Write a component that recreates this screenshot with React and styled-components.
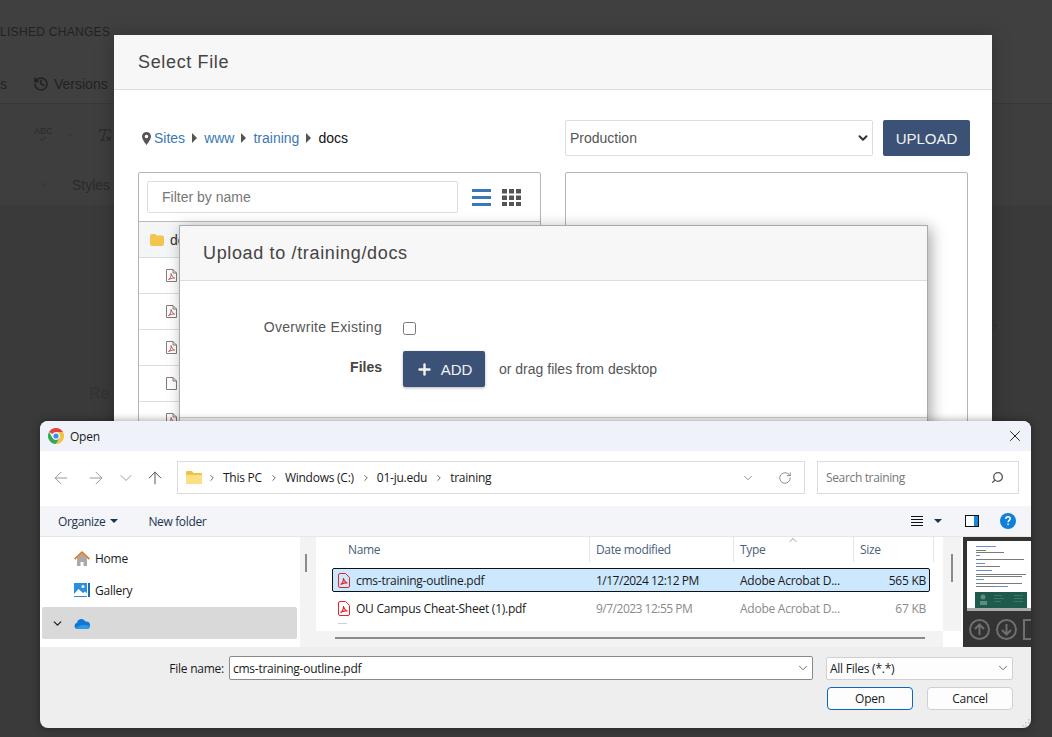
import styled, { createGlobalStyle } from "styled-components";
import {
  ArrowLeft,
  ArrowRight,
  ArrowUp,
  Check,
  ChevronDown,
  ChevronRight,
  ChevronUp,
  History,
  Plus,
  RemoveFormatting,
  RotateCw,
  Search,
  X,
} from "lucide-react";

const GlobalStyle = createGlobalStyle`
  html, body {
    margin: 0;
    padding: 0;
    background: #3a3a3a;
  }
  * {
    box-sizing: border-box;
  }
`;

const WEB_FONT = `"Liberation Sans", Arial, sans-serif`;
const WIN_FONT = `"Open Sans", "Noto Sans", sans-serif`;

// whole screenshot
const Page = styled.div`
  position: relative;
  width: 1052px;
  height: 737px;
  overflow: hidden;
  background: #3a3a3a;
  font-family: ${WEB_FONT};
`;

// dimmed editor behind the modals
const Backdrop = styled.div`
  height: 737px;
  display: flex;
  flex-direction: column;
  color: #222;
`;
const BackTop = styled.div`
  height: 68px;
  background: #404040;
  padding-top: 25px;
  font-size: 12px;
  letter-spacing: 0.3px;
  white-space: nowrap;
`;
const BackTabs = styled.div`
  height: 36px;
  background: #404040;
  border-bottom: 1px solid #383838;
  display: flex;
  align-items: center;
  gap: 26px;
  padding-bottom: 4px;
  font-size: 14px;
`;
const BackVersions = styled.span`
  display: flex;
  align-items: center;
  gap: 5px;
`;
const BackTools = styled.div`
  height: 61px;
  background: #3e3e3e;
  display: flex;
  align-items: center;
  padding-left: 34px;
  gap: 12px;
  color: #2a2a2a;
`;
const SpellIcon = styled.div`
  display: flex;
  flex-direction: column;
  align-items: center;
  font-size: 9px;
  line-height: 8px;
  height: 16px;
`;
const BackStyles = styled.div`
  height: 40px;
  background: #3e3e3e;
  display: flex;
  align-items: center;
  padding-left: 38px;
  gap: 22px;
  font-size: 14px;
  color: #2b2b2b;
`;
const BackBody = styled.div`
  flex: 1;
  background: #3a3a3a;
  display: flex;
  justify-content: space-between;
  font-size: 16px;
  padding: 180px 55px 0 89px;
  color: #333;
`;
const BackWord = styled.span`
  margin-top: ${(p) => p.$top}px;
`;

// Select File modal
const SelectModal = styled.div`
  position: absolute;
  left: 114px;
  top: 35px;
  width: 878px;
  height: 420px;
  background: #fff;
  box-shadow: 0 0 18px rgba(0, 0, 0, 0.25);
`;
const ModalHeader = styled.div`
  height: ${(p) => p.$height}px;
  background: #f7f7f7;
  border-bottom: 1px solid #ddd;
  padding-left: ${(p) => p.$pad}px;
  display: flex;
  align-items: center;
  color: #444;
  font-size: 18px;
  letter-spacing: 0.65px;
`;
const SelectBody = styled.div`
  display: grid;
  grid-template-columns: 403px 403px;
  column-gap: 24px;
  padding: 30px 0 0 24px;
`;
const Breadcrumb = styled.div`
  height: 36px;
  display: flex;
  align-items: center;
  font-size: 14px;
  color: #111;
  padding-left: 4px;
`;
const Crumb = styled.a`
  color: #3b78b8;
  margin-left: ${(p) => (p.$first ? "3px" : "0")};
`;
const Caret = styled.span`
  width: 0;
  height: 0;
  margin: 0 7px 1px 7px;
  border-left: 5px solid #555;
  border-top: 5px solid transparent;
  border-bottom: 5px solid transparent;
`;
const SiteRow = styled.div`
  height: 36px;
  display: flex;
  gap: 10px;
`;
const SiteSelect = styled.div`
  width: 308px;
  height: 36px;
  flex: none;
  border: 1px solid #ddd;
  border-radius: 2px;
  display: flex;
  align-items: center;
  justify-content: space-between;
  padding: 0 2px 0 4px;
  color: #555;
  font-size: 14px;
`;
const NavyButton = styled.div`
  background: #3b5175;
  color: #f2f2f2;
  border-radius: 2px;
  display: flex;
  flex: none;
  align-items: center;
  justify-content: center;
  font-size: 15px;
  width: ${(p) => p.$width}px;
  height: 36px;
  gap: 8px;
  box-shadow: ${(p) => (p.$raised ? "0 1px 3px rgba(0,0,0,.3)" : "none")};
`;
const Panel = styled.div`
  margin-top: 16px;
  height: 300px;
  border: 1px solid #b5b5b5;
  border-radius: 2px;
`;
const FilterBar = styled.div`
  height: 49px;
  padding: 8px 0 0 8px;
  display: flex;
  align-items: flex-start;
  border-bottom: 1px solid #bbb;
`;
const FilterInput = styled.div`
  width: 311px;
  height: 32px;
  border: 1px solid #ddd;
  border-radius: 2px;
  padding-left: 14px;
  display: flex;
  align-items: center;
  color: #777;
  font-size: 14px;
`;
const ViewIcons = styled.div`
  display: flex;
  align-items: center;
  gap: 11px;
  height: 32px;
  padding-left: 14px;
`;
const FolderRow = styled.div`
  height: 36px;
  background: #f4f5f7;
  border-bottom: 1px solid #ddd;
  display: flex;
  align-items: center;
  padding-left: 11px;
  gap: 6px;
  font-size: 14px;
  color: #333;
`;
const FileRow = styled.div`
  height: 36px;
  border-bottom: 1px solid #ddd;
  display: flex;
  align-items: center;
  padding-left: 27px;
`;

// Upload modal
const UploadModal = styled.div`
  position: absolute;
  left: 179px;
  top: 225px;
  width: 749px;
  height: 205px;
  background: #fff;
  border: 1px solid #aaa;
  box-shadow: 3px 3px 14px rgba(0, 0, 0, 0.35);
`;
const UploadForm = styled.div`
  display: grid;
  grid-template-columns: 202px 1fr;
  column-gap: 21px;
  row-gap: 16px;
  padding-top: 40px;
  align-items: center;
  color: #555;
  font-size: 14px;
`;
const FieldLabel = styled.div`
  text-align: right;
  font-weight: ${(p) => (p.$bold ? 700 : 400)};
  color: ${(p) => (p.$bold ? "#444" : "#555")};
  letter-spacing: ${(p) => (p.$bold ? "0" : "0.3px")};
  margin-top: ${(p) => (p.$bold ? "-5px" : "-2px")};
`;
const Checkbox = styled.div`
  width: 13px;
  height: 13px;
  border: 1px solid #777;
  border-radius: 2.5px;
`;
const AddRow = styled.div`
  display: flex;
  align-items: center;
  gap: 14px;
`;
const UploadFooterLine = styled.div`
  position: absolute;
  left: 0;
  right: 0;
  top: 191px;
  height: 13px;
  border-top: 1px solid #ccc;
  background: #f7f7f7;
`;

// Windows open dialog
const Dialog = styled.div`
  position: absolute;
  left: 40px;
  top: 421px;
  width: 991px;
  height: 307px;
  background: #eee;
  border-radius: 8px;
  overflow: hidden;
  font-family: ${WIN_FONT};
  font-size: 12px;
  letter-spacing: -0.25px;
  color: #1a1a1a;
  box-shadow: 0 0 8px rgba(0, 0, 0, 0.4);
`;
const TitleBar = styled.div`
  height: 30px;
  background: #eff3f9;
  display: flex;
  align-items: center;
  padding: 0 7px 0 8px;
  gap: 6px;
`;
const TitleText = styled.span`
  flex: 1;
`;
const NavBar = styled.div`
  height: 55px;
  background: #fff;
  display: flex;
  align-items: center;
  padding: 0 12px 2px 11px;
  color: #9a9a9a;
`;
const NavButtons = styled.div`
  width: 126px;
  display: flex;
  align-items: center;
  gap: 10px;
`;
const AddressBar = styled.div`
  width: 628px;
  height: 33px;
  border: 1px solid #dcdcdc;
  display: flex;
  align-items: center;
  padding: 0 12px 0 8px;
  color: #1a1a1a;
`;
const PathStep = styled.span`
  display: contents;
`;
const PathPart = styled.span`
  margin-left: 6px;
`;
const PathEnd = styled.div`
  margin-left: auto;
  display: flex;
  align-items: center;
  gap: 23px;
  color: #666;
`;
const SearchBox = styled.div`
  width: 202px;
  height: 33px;
  margin-left: 12px;
  border: 1px solid #dcdcdc;
  display: flex;
  align-items: center;
  justify-content: space-between;
  padding: 0 14px 0 8px;
  color: #777;
  letter-spacing: -0.35px;
`;
const CommandBar = styled.div`
  height: 31px;
  background: #f3f5f8;
  border-bottom: 1px solid #e6e6e6;
  display: flex;
  align-items: center;
  padding: 0 15px 0 18px;
  color: #1e3250;
  letter-spacing: -0.35px;
`;
const SmallTriangle = styled.span`
  width: 0;
  height: 0;
  margin-left: ${(p) => p.$gap}px;
  border-top: 4px solid #1e3250;
  border-left: 4px solid transparent;
  border-right: 4px solid transparent;
`;
const NewFolder = styled.span`
  margin-left: 30px;
  flex: 1;
`;
const CommandIcons = styled.div`
  display: flex;
  align-items: center;
`;
const CommandGap = styled.span`
  width: ${(p) => p.$width}px;
`;
const Panes = styled.div`
  height: 110px;
  background: #fff;
  display: flex;
`;
const NavPane = styled.div`
  width: 260px;
  flex: none;
  padding: 5px 3px 0 2px;
`;
const NavItem = styled.div`
  height: 32px;
  border-radius: 2px;
  display: flex;
  align-items: center;
  gap: ${(p) => (p.$open ? "10px" : "5px")};
  margin-top: ${(p) => (p.$open ? "1px" : "0")};
  padding-left: ${(p) => (p.$open ? "9px" : "32px")};
  background: ${(p) => (p.$open ? "#d9d9d9" : "transparent")};
  color: #1a1a1a;
`;
const Splitter = styled.div`
  width: 16px;
  flex: none;
  background: #f3f3f3;
  padding: 17px 0 0 5px;
`;
const ThumbV = styled.div`
  width: 2px;
  height: ${(p) => p.$height}px;
  background: #8a8a8a;
`;
const ListMain = styled.div`
  width: 627px;
  flex: none;
  background: #f3f3f3;
`;
const ListWhite = styled.div`
  height: 94px;
  background: #fff;
  overflow: hidden;
`;
const ColumnHeads = styled.div`
  display: grid;
  grid-template-columns: 274px 144px 120px 80px;
  height: 25px;
  color: #4c607a;
  letter-spacing: -0.35px;
`;
const ColumnHead = styled.div`
  position: relative;
  padding-left: ${(p) => (p.$first ? "32px" : "6px")};
  display: flex;
  align-items: center;
  border-right: 1px solid #e5e5e5;
`;
const SortMark = styled.span`
  position: absolute;
  left: 53px;
  top: -3px;
  color: #555;
  display: flex;
`;
const FileLine = styled.div`
  display: grid;
  grid-template-columns: 257px 144px 120px 75px;
  width: 598px;
  height: 24px;
  margin: ${(p) => (p.$selected ? "6px" : "4px")} 0 0 16px;
  align-items: center;
  background: ${(p) => (p.$selected ? "#cce8ff" : "transparent")};
  border: 1px solid ${(p) => (p.$selected ? "#111" : "transparent")};
  border-radius: 2px;
  color: ${(p) => (p.$selected ? "#1a1a1a" : "#8a8a8a")};
`;
const NameCell = styled.div`
  white-space: nowrap;
  overflow: hidden;
  padding-left: 5px;
  color: #1a1a1a;
  display: flex;
  align-items: center;
  gap: 6px;
`;
const FileCell = styled.div`
  white-space: nowrap;
  overflow: hidden;
  padding: 0 3px 0 6px;
  letter-spacing: ${(p) => (p.$date ? "-0.5px" : "-0.25px")};
  text-align: ${(p) => (p.$right ? "right" : "left")};
`;
const NextRowPeek = styled.div`
  width: 9px;
  height: 1px;
  margin: 3px 0 0 22px;
  background: #d0d0d0;
`;
const HScroll = styled.div`
  height: 2px;
  width: 590px;
  margin: 6px 0 0 19px;
  background: #8a8a8a;
`;
const VScrollColumn = styled.div`
  width: 18px;
  flex: none;
  height: 94px;
  background: #f3f3f3;
  padding: 17px 0 0 8px;
`;
const Preview = styled.div`
  width: 68px;
  flex: none;
  height: 110px;
  margin-left: 2px;
  background: #333;
  padding: 4px 0 0 4px;
  overflow: hidden;
`;
const PreviewButtons = styled.div`
  display: flex;
  gap: 6px;
  padding: 8px 0 0 2px;
`;
const PreviewBox = styled.div`
  width: 14px;
  height: 21px;
  flex: none;
  border: 2px solid #6f6f6f;
`;
const Footer = styled.div`
  padding: 9px 18px 0 0;
`;
const FooterRow = styled.div`
  display: flex;
  align-items: center;
  justify-content: flex-end;
`;
const ButtonRow = styled(FooterRow)`
  margin-top: 7px;
`;
const FooterLabel = styled.span`
  margin-right: 5px;
`;
const NameInput = styled.div`
  width: 584px;
  height: 24px;
  background: #fff;
  border: 1px solid #8a8a8a;
  border-radius: 2px;
  display: flex;
  align-items: center;
  justify-content: space-between;
  padding: 0 2px 0 3px;
  margin-right: 13px;
`;
const TypeSelect = styled.div`
  width: 187px;
  height: 23px;
  background: #fdfdfd;
  border: 1px solid #d0d0d0;
  border-radius: 2px;
  display: flex;
  align-items: center;
  justify-content: space-between;
  padding: 0 2px 0 3px;
`;
const WinButton = styled.div`
  width: 86px;
  height: 23px;
  margin-left: ${(p) => (p.$primary ? "0" : "14px")};
  background: #fdfdfd;
  border: 1px solid ${(p) => (p.$primary ? "#0a68c4" : "#d0d0d0")};
  border-radius: 4px;
  display: flex;
  align-items: center;
  justify-content: center;
`;
const ResizeGrip = styled.svg`
  position: absolute;
  right: 1px;
  bottom: 1px;
`;

const HamburgerIcon = () => (
  <svg width="19" height="17" viewBox="0 0 19 17">
    <rect y="0" width="19" height="3" fill="#3b78b8" />
    <rect y="7" width="19" height="3" fill="#3b78b8" />
    <rect y="14" width="19" height="3" fill="#3b78b8" />
  </svg>
);

const GridIcon = () => (
  <svg width="19" height="17" viewBox="0 0 19 17" fill="#555">
    {[0, 6.5, 13].map((y) =>
      [0, 7, 14].map((x) => <rect key={`${x}-${y}`} x={x} y={y} width="5" height="4.5" />)
    )}
  </svg>
);

const PinIcon = () => (
  <svg width="9" height="13" viewBox="0 0 9 13">
    <path
      d="M4.5 0C2 0 0 2 0 4.5 0 7.5 4.5 13 4.5 13S9 7.5 9 4.5C9 2 7 0 4.5 0Z M4.5 2.7a1.8 1.8 0 1 1 0 3.6 1.8 1.8 0 0 1 0-3.6Z"
      fill="#555"
      fillRule="evenodd"
    />
  </svg>
);

const WebFolderIcon = () => (
  <svg width="14" height="12" viewBox="0 0 14 12">
    <path
      d="M2 0h3.2l1.4 1.6H12a2 2 0 0 1 2 2V10a2 2 0 0 1-2 2H2a2 2 0 0 1-2-2V2a2 2 0 0 1 2-2Z"
      fill="#f3c54e"
    />
  </svg>
);

const SmallFileIcon = ({ pdf }) => (
  <svg width="11" height="13" viewBox="0 0 11 13" fill="none" stroke="#8a7a7a" strokeWidth="1">
    <path d="M.5.5H7L10.5 4v8.5H.5Z M7 .5V4h3.5" />
    {pdf && <path d="M2.5 10.5c2-1 3-4 2.500-6 .5 2 2 4 3.500 4.500-2 0-4 .5-6 1.500Z" strokeWidth=".8" stroke="#b03a3a" />}
  </svg>
);

const ChromeIcon = () => (
  <svg width="16" height="16" viewBox="0 0 16 16">
    <path d="M8 0a8 8 0 0 1 6.930 4H8a4 4 0 0 0-3.460 2L1.070 4A8 8 0 0 1 8 0Z" fill="#e0453a" />
    <path d="M14.930 4A8 8 0 0 1 8 16l3.460-6a4 4 0 0 0 0-4A4 4 0 0 0 8 4Z" fill="#f5c33b" />
    <path d="M1.070 4l3.470 6A4 4 0 0 0 8 12a4 4 0 0 0 3.460-2L8 16A8 8 0 0 1 1.070 4Z" fill="#34a853" />
    <circle cx="8" cy="8" r="3.200" fill="#fff" />
    <circle cx="8" cy="8" r="2.600" fill="#4285f4" />
  </svg>
);

const WinFolderIcon = () => (
  <svg width="16" height="13" viewBox="0 0 16 13">
    <path d="M1 0h5l1.500 2H15a1 1 0 0 1 1 1v9a1 1 0 0 1-1 1H1a1 1 0 0 1-1-1V1a1 1 0 0 1 1-1Z" fill="#f0c244" />
    <path d="M0 4h16v8a1 1 0 0 1-1 1H1a1 1 0 0 1-1-1Z" fill="#fbdf83" />
  </svg>
);

const HomeIcon = () => (
  <svg width="16" height="15" viewBox="0 0 16 15">
    <path d="M3 7 8 2.500 13 7v8H9.500v-4h-3v4H3Z" fill="#a9a9a9" />
    <path d="M0 7.500 8 0l8 7.500-1.200 1.200L8 2.400 1.200 8.700Z" fill="#dd7a28" />
  </svg>
);

const GalleryIcon = () => (
  <svg width="16" height="16" viewBox="0 0 16 16">
    <rect x="0" y="1" width="13" height="14" fill="#2b8fe0" />
    <rect x="14" y="1" width="2" height="14" fill="#1c6cb5" />
    <circle cx="9" cy="4.500" r="1.500" fill="#fff" />
    <path d="M0 12 4.500 7 9 11l2-1.500 2 2V14H0Z" fill="#fff" />
  </svg>
);

const CloudIcon = () => (
  <svg width="16" height="11" viewBox="0 0 16 11">
    <path d="M3.500 11A3.200 3.200 0 0 1 3 4.700 4.500 4.500 0 0 1 11.500 3.500 3.800 3.800 0 0 1 13 11Z" fill="#0f78d4" />
    <path d="M2 10.500C4 7.500 9 6 16 8c-.4 2-1.500 3-3 3H3.500Z" fill="#2b9be8" />
  </svg>
);

const RedPdfIcon = () => (
  <svg width="12" height="15" viewBox="0 0 12 15" fill="none" stroke="#e3242b" style={{ flex: "none" }}>
    <path d="M2 .5h5.500L11.500 4.500V13a1.500 1.500 0 0 1-1.500 1.500H2A1.500 1.500 0 0 1 .5 13V2A1.500 1.500 0 0 1 2 .5Z" />
    <path d="M2.500 11.500c2-1 3-4 3-6.500.5 2.500 2 4.500 4 5-2.500-.3-5 .2-7 1.500Z" strokeWidth="1.100" />
  </svg>
);

const DetailsIcon = () => (
  <svg width="12" height="10" viewBox="0 0 12 10" stroke="#111" strokeWidth="1">
    {[0.5, 3.5, 6.5, 9.5].map((y) => (
      <line key={y} x1="0" x2="12" y1={y} y2={y} />
    ))}
  </svg>
);

const PreviewPaneIcon = () => (
  <svg width="14" height="12" viewBox="0 0 14 12">
    <rect x=".5" y=".5" width="13" height="11" fill="#fff" stroke="#111" />
    <rect x="9" y="1" width="4" height="10" fill="#1a86d9" />
  </svg>
);

const HelpIcon = () => (
  <svg width="16" height="16" viewBox="0 0 16 16">
    <circle cx="8" cy="8" r="8" fill="#0f7fd8" />
    <path d="M5.800 6c0-3 4.400-3 4.400-.3 0 1.700-2.100 1.700-2.100 3.500" fill="none" stroke="#fff" strokeWidth="1.500" />
    <rect x="7.300" y="10.500" width="1.500" height="1.600" fill="#fff" />
  </svg>
);

// tiny picture of the selected pdf
const PdfThumb = () => (
  <svg width="64" height="70" viewBox="0 0 64 70" style={{ display: "block" }}>
    <rect width="64" height="70" fill="#fff" />
    <g fill="#444" opacity="0.7">
      <rect x="9" y="5" width="20" height="1" fill="#2b5fc0" />
      <rect x="9" y="9" width="10" height="1" />
      <rect x="9" y="11" width="28" height="1" />
      <rect x="9" y="14" width="4" height="1" fill="#2b5fc0" />
      <rect x="9" y="18" width="48" height="1" />
      <rect x="9" y="22" width="9" height="1" fill="#2b5fc0" />
      <rect x="9" y="25" width="24" height="1" />
      <rect x="9" y="29" width="16" height="1" fill="#2b5fc0" />
      <rect x="9" y="33" width="50" height="1" />
      <rect x="9" y="35" width="46" height="1" />
      <rect x="9" y="38" width="8" height="1" fill="#2b5fc0" />
      <rect x="9" y="42" width="46" height="1" />
      <rect x="9" y="45" width="18" height="1" />
      <rect x="27" y="45" width="14" height="1" fill="#2b5fc0" />
    </g>
    <rect x="8" y="51" width="52" height="16" fill="#1d5c4d" />
    <circle cx="16" cy="56" r="2.500" fill="#5f8c80" />
    <rect x="13" y="60" width="7" height="4" fill="#5f8c80" />
    <g fill="#3f7667">
      <rect x="27" y="54" width="8" height="1" />
      <rect x="27" y="57" width="10" height="1" />
      <rect x="27" y="60" width="7" height="1" />
      <rect x="47" y="54" width="9" height="1" />
      <rect x="47" y="57" width="9" height="1" />
      <rect x="47" y="60" width="9" height="1" />
    </g>
    <rect y="67" width="64" height="3" fill="#aaa" />
  </svg>
);

const CircleArrow = ({ down }) => (
  <svg width="21" height="21" viewBox="0 0 21 21" fill="none" stroke="#6f6f6f" strokeWidth="2" style={{ flex: "none" }}>
    <circle cx="10.500" cy="10.500" r="9.500" />
    {down ? <path d="M10.500 5v10M6 11l4.500 4.500L15 11" /> : <path d="M10.500 16V6M6 10l4.500-4.500L15 10" />}
  </svg>
);

const files = [
  { name: "cms-training-outline.pdf", date: "1/17/2024 12:12 PM", size: "565 KB", selected: true },
  { name: "OU Campus Cheat-Sheet (1).pdf", date: "9/7/2023 12:55 PM", size: "67 KB" },
];

const pathParts = ["This PC", "Windows (C:)", "01-ju.edu", "training"];

export default function App() {
  return (
    <Page>
      <GlobalStyle />
      <Backdrop>
        <BackTop>LISHED CHANGES</BackTop>
        <BackTabs>
          <span>s</span>
          <BackVersions>
            <History size={16} strokeWidth={2.4} />
            Versions
          </BackVersions>
        </BackTabs>
        <BackTools>
          <SpellIcon>
            ABC
            <Check size={10} strokeWidth={3} />
          </SpellIcon>
          <ChevronDown size={10} strokeWidth={2} color="#333" />
          <RemoveFormatting size={16} strokeWidth={1.6} style={{ marginLeft: 10 }} />
        </BackTools>
        <BackStyles>
          <ChevronDown size={12} strokeWidth={2} color="#333" />
          Styles
        </BackStyles>
        <BackBody>
          <BackWord $top={0}>Re</BackWord>
          <BackWord $top={-70}>s</BackWord>
        </BackBody>
      </Backdrop>

      <SelectModal>
        <ModalHeader $height={55} $pad={24}>
          Select File
        </ModalHeader>
        <SelectBody>
          <Breadcrumb>
            <PinIcon />
            <Crumb $first>Sites</Crumb>
            <Caret />
            <Crumb>www</Crumb>
            <Caret />
            <Crumb>training</Crumb>
            <Caret />
            docs
          </Breadcrumb>
          <SiteRow>
            <SiteSelect>
              Production
              <ChevronDown size={14} strokeWidth={3.4} color="#333" />
            </SiteSelect>
            <NavyButton $width={87}>UPLOAD</NavyButton>
          </SiteRow>
          <Panel>
            <FilterBar>
              <FilterInput>Filter by name</FilterInput>
              <ViewIcons>
                <HamburgerIcon />
                <GridIcon />
              </ViewIcons>
            </FilterBar>
            <FolderRow>
              <WebFolderIcon />
              docs
            </FolderRow>
            <FileRow>
              <SmallFileIcon pdf />
            </FileRow>
            <FileRow>
              <SmallFileIcon pdf />
            </FileRow>
            <FileRow>
              <SmallFileIcon pdf />
            </FileRow>
            <FileRow>
              <SmallFileIcon />
            </FileRow>
            <FileRow>
              <SmallFileIcon pdf />
            </FileRow>
          </Panel>
          <Panel />
        </SelectBody>
      </SelectModal>

      <UploadModal>
        <ModalHeader $height={55} $pad={23}>
          Upload to /training/docs
        </ModalHeader>
        <UploadForm>
          <FieldLabel>Overwrite Existing</FieldLabel>
          <Checkbox />
          <FieldLabel $bold>Files</FieldLabel>
          <AddRow>
            <NavyButton $width={82} $raised>
              <Plus size={17} strokeWidth={3.4} />
              ADD
            </NavyButton>
            or drag files from desktop
          </AddRow>
        </UploadForm>
        <UploadFooterLine />
      </UploadModal>

      <Dialog>
        <TitleBar>
          <ChromeIcon />
          <TitleText>Open</TitleText>
          <X size={18} strokeWidth={1.2} color="#111" />
        </TitleBar>
        <NavBar>
          <NavButtons>
            <ArrowLeft size={20} strokeWidth={1.2} />
            <ArrowRight size={20} strokeWidth={1.2} style={{ marginLeft: 5 }} />
            <ChevronDown size={20} strokeWidth={1.2} />
            <ArrowUp size={20} strokeWidth={1.2} color="#555" style={{ marginLeft: -1 }} />
          </NavButtons>
          <AddressBar>
            <WinFolderIcon />
            {pathParts.map((part, i) => (
              <PathStep key={part}>
                <ChevronRight size={10} strokeWidth={2.4} color="#666" style={{ marginLeft: i === 0 ? 5 : 7 }} />
                <PathPart>{part}</PathPart>
              </PathStep>
            ))}
            <PathEnd>
              <ChevronDown size={14} strokeWidth={1.2} />
              <RotateCw size={14} strokeWidth={1.2} />
            </PathEnd>
          </AddressBar>
          <SearchBox>
            Search training
            <Search size={13} strokeWidth={2.4} color="#555" style={{ transform: "scaleX(-1)" }} />
          </SearchBox>
        </NavBar>
        <CommandBar>
          Organize
          <SmallTriangle $gap={5} />
          <NewFolder>New folder</NewFolder>
          <CommandIcons>
            <DetailsIcon />
            <SmallTriangle $gap={11} />
            <CommandGap $width={23} />
            <PreviewPaneIcon />
            <CommandGap $width={21} />
            <HelpIcon />
          </CommandIcons>
        </CommandBar>
        <Panes>
          <NavPane>
            <NavItem>
              <HomeIcon />
              Home
            </NavItem>
            <NavItem>
              <GalleryIcon />
              Gallery
            </NavItem>
            <NavItem $open>
              <ChevronDown size={13} strokeWidth={2.4} color="#222" />
              <CloudIcon />
            </NavItem>
          </NavPane>
          <Splitter>
            <ThumbV $height={18} />
          </Splitter>
          <ListMain>
            <ListWhite>
              <ColumnHeads>
                <ColumnHead $first>Name</ColumnHead>
                <ColumnHead>Date modified</ColumnHead>
                <ColumnHead>
                  Type
                  <SortMark>
                    <ChevronUp size={12} strokeWidth={1.2} />
                  </SortMark>
                </ColumnHead>
                <ColumnHead>Size</ColumnHead>
              </ColumnHeads>
              {files.map((f) => (
                <FileLine key={f.name} $selected={f.selected}>
                  <NameCell>
                    <RedPdfIcon />
                    {f.name}
                  </NameCell>
                  <FileCell $date>{f.date}</FileCell>
                  <FileCell>Adobe Acrobat D...</FileCell>
                  <FileCell $right>{f.size}</FileCell>
                </FileLine>
              ))}
              <NextRowPeek />
            </ListWhite>
            <HScroll />
          </ListMain>
          <VScrollColumn>
            <ThumbV $height={28} />
          </VScrollColumn>
          <Preview>
            <PdfThumb />
            <PreviewButtons>
              <CircleArrow />
              <CircleArrow down />
              <PreviewBox />
            </PreviewButtons>
          </Preview>
        </Panes>
        <Footer>
          <FooterRow>
            <FooterLabel>File name:</FooterLabel>
            <NameInput>
              cms-training-outline.pdf
              <ChevronDown size={14} strokeWidth={1.3} color="#444" />
            </NameInput>
            <TypeSelect>
              All Files (*.*)
              <ChevronDown size={14} strokeWidth={1.3} color="#444" />
            </TypeSelect>
          </FooterRow>
          <ButtonRow>
            <WinButton $primary>Open</WinButton>
            <WinButton>Cancel</WinButton>
          </ButtonRow>
        </Footer>
        <ResizeGrip width="9" height="9" viewBox="0 0 9 9" fill="#c4c4c4">
          <rect x="7" y="1" width="1.500" height="1.500" />
          <rect x="4" y="4" width="1.500" height="1.500" />
          <rect x="7" y="4" width="1.500" height="1.500" />
          <rect x="1" y="7" width="1.500" height="1.500" />
          <rect x="4" y="7" width="1.500" height="1.500" />
          <rect x="7" y="7" width="1.500" height="1.500" />
        </ResizeGrip>
      </Dialog>
    </Page>
  );
}
